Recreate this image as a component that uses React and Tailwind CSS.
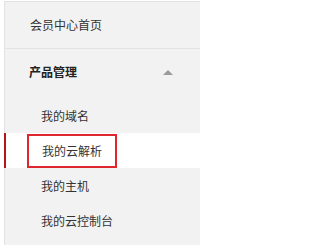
export default function App() {
  const font = { fontFamily: '"Noto Sans CJK SC", "Liberation Sans", sans-serif' };

  return (
    <div className="w-[200px] h-[245px] bg-white pl-1 pt-px overflow-hidden" style={font}>
      <div className="h-full bg-[#f2f2f2] border-l border-t border-[#e3e3e3] text-[12px] text-[#333]">
        {/* 首页 */}
        <div className="h-[47px] flex items-center pl-[25px] border-b border-[#e3e3e3]">
          会员中心首页
        </div>

        {/* 产品管理 */}
        <div className="h-[46px] flex items-center justify-between pl-[24px] pr-[27px] font-bold text-[#222]">
          <span>产品管理</span>
          <span className="w-0 h-0 border-l-[5px] border-r-[5px] border-b-[5px] border-l-transparent border-r-transparent border-b-[#9a9a9a]" />
        </div>

        {/* 子菜单 */}
        <div className="flex flex-col pt-[3px]">
          <div className="h-[35px] flex items-center pl-[36px]">我的域名</div>
          <div className="h-[35px] flex items-center bg-white border-l-[2px] border-[#b5141c] -ml-px pl-[21px]">
            <span className="h-[34px] flex items-center px-[13px] border-2 border-[#e0262d]">我的云解析</span>
          </div>
          <div className="h-[35px] flex items-center pl-[36px]">我的主机</div>
          <div className="h-[35px] flex items-center pl-[36px]">我的云控制台</div>
        </div>
      </div>
    </div>
  );
}
